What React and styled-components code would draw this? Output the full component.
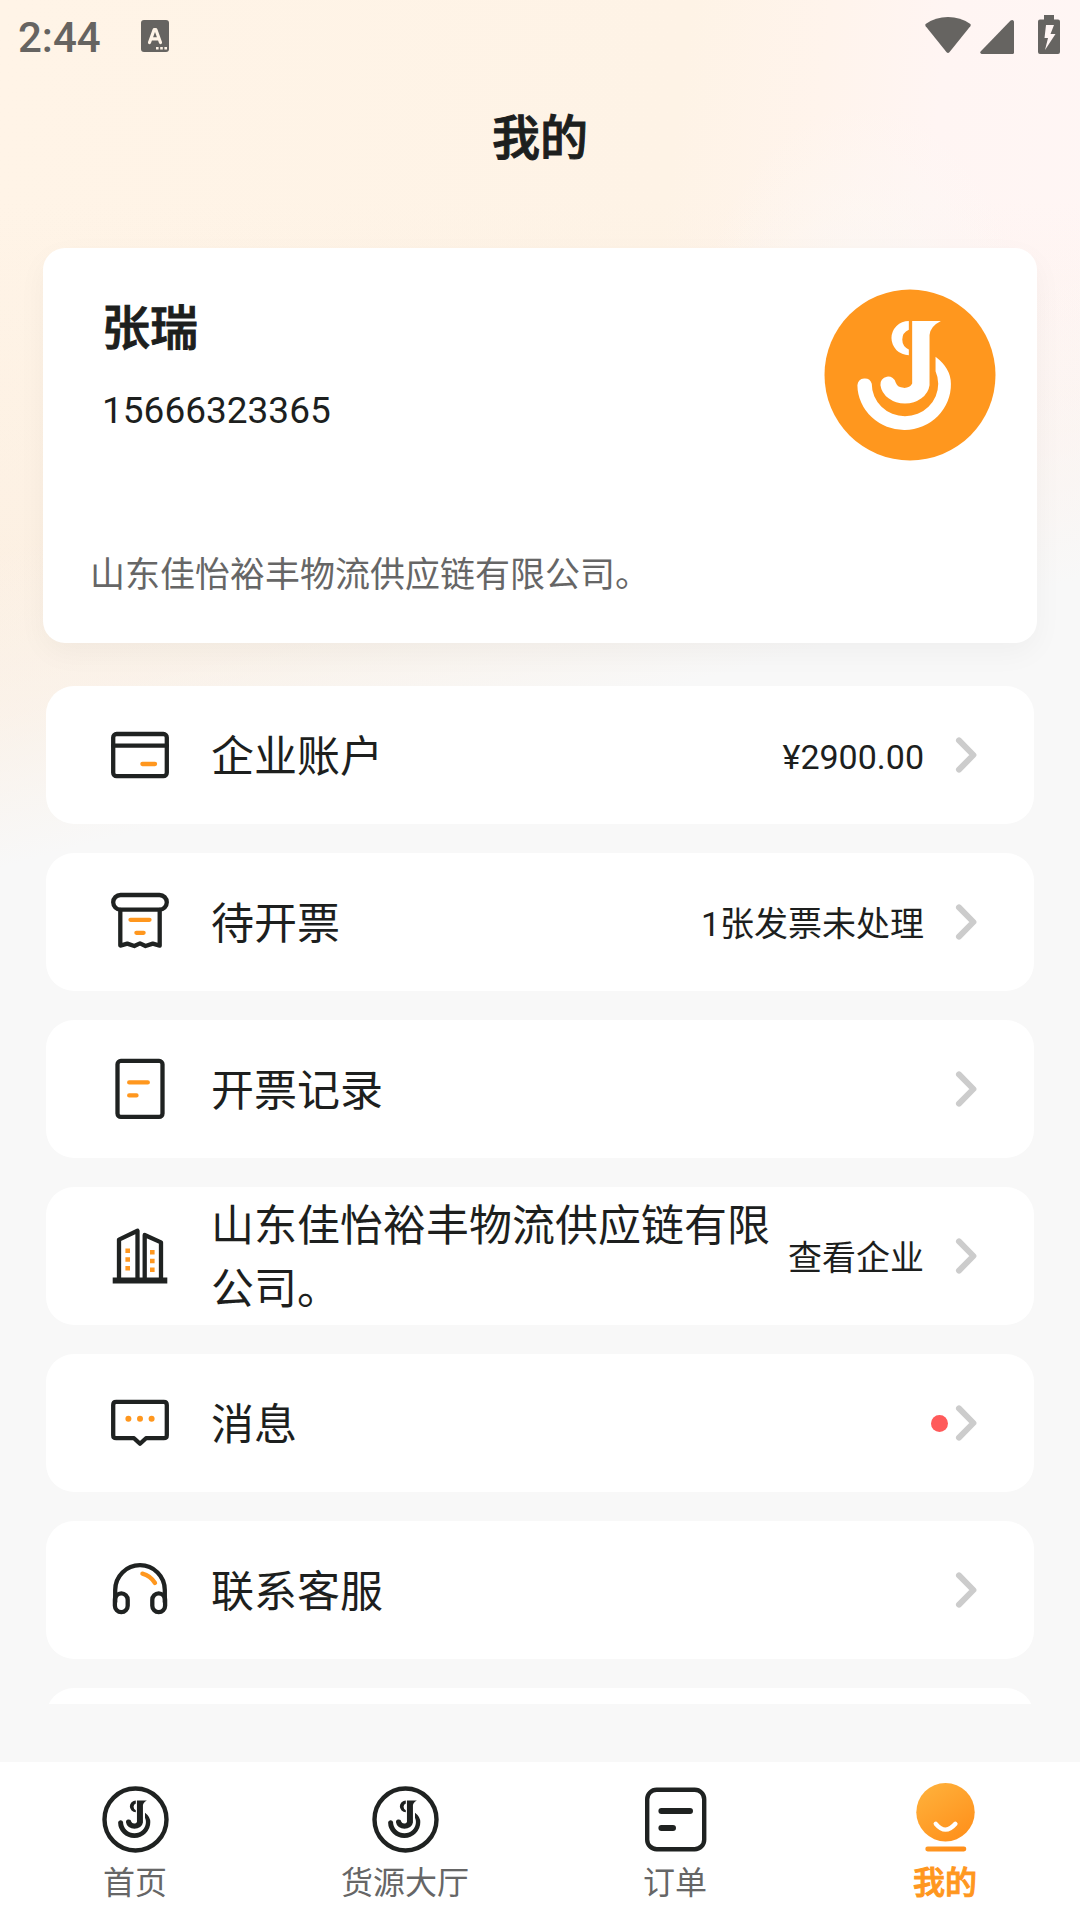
import React from 'react';
import styled, { createGlobalStyle } from 'styled-components';

const GlobalStyle = createGlobalStyle`
  * {
    box-sizing: border-box;
  }

  body {
    margin: 0;
    background: #f8f8f8;
    color: #1d1f1e;
    font-family: Roboto, 'Noto Sans CJK SC', sans-serif;
  }
`;

const Page = styled.div`
  display: flex;
  flex-direction: column;
  height: 100vh;
  background:
    linear-gradient(165deg, rgba(248, 248, 248, 0) 46%, rgba(248, 248, 248, 0.35) 60%, #f8f8f8 73%) 0 0 / 100% 900px no-repeat,
    radial-gradient(ellipse 170px 260px at 80% 360px, rgba(251, 249, 246, 0.9), rgba(252, 248, 245, 0)) no-repeat,
    linear-gradient(180deg, rgba(248, 234, 220, 0) 200px, rgba(248, 234, 220, 0.5) 700px) 0 0 / 100% 900px no-repeat,
    linear-gradient(97deg, #fff4e7 0%, #fef3e6 58%, #fff4ec 70%, #fff5f3 80%, #fff6f5 100%) 0 0 / 100% 900px no-repeat,
    #f8f8f8;
`;

const StatusBar = styled.div`
  display: flex;
  align-items: center;
  justify-content: space-between;
  height: 72px;
  padding: 0 20px 0 18px;
  color: #666461;
`;

const StatusGroup = styled.div`
  display: flex;
  align-items: center;
  gap: ${({ $gap }) => $gap}px;
`;

const Clock = styled.span`
  padding-top: 4px;
  font-size: 42px;
  font-weight: 500;
  line-height: 76px;
`;

const Header = styled.header`
  display: flex;
  align-items: center;
  justify-content: center;
  height: 130px;
  padding-top: 4px;
`;

const Title = styled.h1`
  margin: 0;
  font-size: 48px;
  font-weight: 500;
  line-height: 60px;
  -webkit-text-stroke: 1px currentColor;
`;

const Content = styled.main`
  flex: 1;
  min-height: 0;
  margin-bottom: 58px;
  padding: 46px 43px 0;
  overflow-y: auto;
  scrollbar-width: none;
`;

const ProfileCard = styled.section`
  padding: 41px 41px 42px 47px;
  border-radius: 22px;
  background: #fff;
  box-shadow: 0 10px 30px rgba(0, 0, 0, 0.04);
`;

const ProfileTop = styled.div`
  display: flex;
  justify-content: space-between;
  margin-bottom: 90px;
`;

const ProfileInfo = styled.div`
  padding: 10px 0 0 12px;
`;

const Name = styled.h2`
  margin: 0 0 30px;
  font-size: 48px;
  font-weight: 500;
  line-height: 60px;
  -webkit-text-stroke: 1px currentColor;
`;

const Phone = styled.p`
  margin: 0;
  font-size: 37px;
  line-height: 44px;
`;

const Company = styled.p`
  margin: 0;
  color: #666;
  font-size: 35px;
  line-height: 50px;
`;

const Menu = styled.div`
  display: flex;
  flex-direction: column;
  gap: 29px;
  padding: 43px 3px 0;
`;

const MenuRow = styled.button`
  display: flex;
  flex-shrink: 0;
  align-items: center;
  width: 100%;
  height: 138px;
  padding: 0 50px 0 62px;
  border: 0;
  border-radius: 28px;
  background: #fff;
  color: inherit;
  font-family: inherit;
  text-align: left;
`;

const MenuLabel = styled.span`
  flex: 1;
  margin: 0 12px 0 39px;
  padding-top: 4px;
  font-size: 43px;
  line-height: 63px;
`;

const MenuValue = styled.span`
  margin-right: 24px;
  padding-top: 4px;
  font-size: 34px;
  line-height: 50px;
`;

const Dot = styled.span`
  width: 17px;
  height: 17px;
  border-radius: 50%;
  background: #ff5a5a;
`;

const TabBar = styled.nav`
  display: flex;
  flex-shrink: 0;
  background: #fff;
`;

const Tab = styled.a`
  display: flex;
  flex: 1;
  flex-direction: column;
  align-items: center;
  gap: 5px;
  padding: 21px 0 14px;
  color: ${({ $active }) => ($active ? '#ff971e' : '#666')};
  font-size: 32px;
  font-weight: ${({ $active }) => ($active ? 500 : 400)};
  line-height: 46px;
  text-decoration: none;
  -webkit-text-stroke: ${({ $active }) => ($active ? '1px currentColor' : '0')};
`;

const INK = '#1f2221';
const ORANGE = '#ff971e';

const LineIcon = ({ children }) => (
  <svg
    width="64"
    height="64"
    viewBox="0 0 64 64"
    fill="none"
    stroke={INK}
    strokeWidth="4.3"
    strokeLinecap="round"
    strokeLinejoin="round"
    aria-hidden="true"
  >
    {children}
  </svg>
);

const CardIcon = () => (
  <LineIcon>
    <rect x="5.2" y="11" width="53.6" height="42.2" rx="3.4" />
    <path d="M5.2 22.7H58.8" />
    <path d="M34.4 41H47" stroke={ORANGE} />
  </LineIcon>
);

const TicketIcon = () => (
  <LineIcon>
    <rect x="5.2" y="5" width="53.6" height="14.6" rx="7.3" />
    <path d="M12.3 20V55.6L19.3 53.6L26.3 56L32 53.4L37.5 56L44.8 53.6L51.7 55.6V20" />
    <path d="M22.5 29.8H41.5M28.4 42.8H35.6" stroke={ORANGE} />
  </LineIcon>
);

const RecordIcon = () => (
  <LineIcon>
    <rect x="9.5" y="3.9" width="45" height="56" rx="3.4" />
    <path d="M21.2 25.4H39.8M21.2 38.4H28.5" stroke={ORANGE} />
  </LineIcon>
);

const BuildingIcon = () => (
  <LineIcon>
    <path d="M11 56V15.6L29.5 6.8V56M36.7 56V11L53 18.4V56" />
    <path d="M4.7 56.4H59.3" strokeWidth="6" strokeLinecap="butt" />
    <path
      d="M17.4 26.7H22M17.4 35.5H22M17.4 44.3H22M42 28.3H46.6M42 37H46.6M42 45.7H46.6"
      stroke={ORANGE}
      strokeWidth="4.6"
      strokeLinecap="butt"
    />
  </LineIcon>
);

const MessageIcon = () => (
  <LineIcon>
    <path d="M8.2 10.9H55.8Q58.8 10.9 58.8 13.9V44.2Q58.8 47.2 55.8 47.2H38L32 52.8L26 47.2H8.2Q5.2 47.2 5.2 44.2V13.9Q5.2 10.9 8.2 10.9Z" />
    <g fill={ORANGE} stroke="none">
      <circle cx="20.4" cy="27.8" r="3" />
      <circle cx="32" cy="27.8" r="3" />
      <circle cx="43.6" cy="27.8" r="3" />
    </g>
  </LineIcon>
);

const HeadsetIcon = () => (
  <LineIcon>
    <path d="M7.2 44V32A24.8 24.8 0 0 1 56.8 32V44" />
    <rect x="6.9" y="35.3" width="12.8" height="18.8" rx="6.4" />
    <rect x="44.3" y="35.3" width="12.8" height="18.8" rx="6.4" />
    <path d="M34.4 15.6Q42.4 17.6 47 25" stroke={ORANGE} />
  </LineIcon>
);

const Chevron = () => (
  <svg width="36" height="44" viewBox="0 0 36 44" fill="none" aria-hidden="true">
    <path d="M11 7.4L25.4 22L11 36.6" stroke="#ccc" strokeWidth="6" strokeLinecap="round" strokeLinejoin="round" />
  </svg>
);

const LogoMark = () => (
  <>
    <path d="M264 96H350Q318 112 316 138V288A74 62 0 0 1 169 288A23 22 0 0 1 215 281A26 21 0 0 0 264 283Z" />
    <path d="M254 96A52 51 0 0 0 254 198V181A32 32 0 0 1 254 122Z" />
    <path d="M100 288A22 22 0 0 1 143 284A99.5 97 0 0 0 342 284Q342 264 334 246V203Q380 238 380 284A140 136 0 0 1 100 288Z" />
  </>
);

const Avatar = () => (
  <svg width="172" height="172" viewBox="0 0 515 515" aria-hidden="true">
    <circle cx="257.5" cy="257.5" r="256" fill={ORANGE} />
    <g fill="#fff">
      <LogoMark />
    </g>
  </svg>
);

const LogoTabIcon = () => (
  <svg width="72" height="72" viewBox="0 0 72 72" aria-hidden="true">
    <circle cx="36.5" cy="36.5" r="31" fill="none" stroke={INK} strokeWidth="4.4" />
    <g fill={INK} transform="translate(7.6 6.4) scale(.115)">
      <LogoMark />
    </g>
  </svg>
);

const OrderTabIcon = () => (
  <svg width="72" height="72" viewBox="0 0 72 72" fill="none" stroke={INK} strokeLinecap="round" aria-hidden="true">
    <rect x="8.2" y="6.7" width="57" height="59.5" rx="9.5" strokeWidth="4.4" />
    <path d="M22.4 28H51M22.4 45H34" strokeWidth="6" />
  </svg>
);

const MineTabIcon = () => (
  <svg width="72" height="72" viewBox="0 0 72 72" fill="none" aria-hidden="true">
    <defs>
      <linearGradient id="mine" x1="14" y1="4" x2="52" y2="62" gradientUnits="userSpaceOnUse">
        <stop stopColor="#ffb03a" />
        <stop offset="1" stopColor="#ff8f1a" />
      </linearGradient>
    </defs>
    <circle cx="36.5" cy="29.2" r="29.2" fill="url(#mine)" />
    <path d="M26.8 40.8Q36.5 52.4 46.4 40.8" stroke="#fff" strokeWidth="4.4" strokeLinecap="round" />
    <rect x="16.3" y="63.6" width="41" height="4.8" rx="2.4" fill="url(#mine)" />
  </svg>
);

const InputModeIcon = () => (
  <svg width="28" height="32" viewBox="0 0 28 32" fill="none" aria-hidden="true">
    <rect width="28" height="32" rx="3" fill="currentColor" />
    <path
      d="M8.5 22.5L13.2 9.5H14.8L19.5 22.5M10.5 18.8H17.5"
      stroke="#fff4e7"
      strokeWidth="3.2"
      strokeLinecap="round"
      strokeLinejoin="round"
    />
    <path d="M15 28.2H17.6M19.2 28.2H21.8M23.4 28.2H26" stroke="#fff4e7" strokeWidth="2.6" />
  </svg>
);

const WifiIcon = () => (
  <svg width="46" height="40" viewBox="0 0 46 40" fill="currentColor" aria-hidden="true">
    <path d="M0.7 10.2Q-0.3 8.8 1 7.8Q10.5 1 23 1Q35.5 1 45 7.8Q46.3 8.8 45.3 10.2L24.4 36.2Q23 37.8 21.6 36.2Z" />
  </svg>
);

const SignalIcon = () => (
  <svg width="34" height="40" viewBox="0 0 34 40" fill="currentColor" aria-hidden="true">
    <path d="M0.6 35.4L30.6 4.6Q32.2 3.4 33.4 4.4Q34 5 34 6V36.5Q34 38 32.5 38H1.6Q-0.6 37.2 0.6 35.4Z" />
  </svg>
);

const BatteryIcon = () => (
  <svg width="22" height="40" viewBox="0 0 22 40" fill="currentColor" overflow="visible" aria-hidden="true">
    <path
      fillRule="evenodd"
      d="M6 -1H16V3.5H20Q22 3.5 22 5.5V36Q22 38 20 38H2Q0 38 0 36V5.5Q0 3.5 2 3.5H6ZM8 9L6.5 22H10L7 34L17.5 18H12.5L16 9Z"
    />
  </svg>
);

const menuItems = [
  { icon: CardIcon, label: '企业账户', value: '¥2900.00' },
  { icon: TicketIcon, label: '待开票', value: '1张发票未处理' },
  { icon: RecordIcon, label: '开票记录' },
  { icon: BuildingIcon, label: '山东佳怡裕丰物流供应链有限公司。', value: '查看企业' },
  { icon: MessageIcon, label: '消息', unread: true },
  { icon: HeadsetIcon, label: '联系客服' },
];

const tabs = [
  { icon: LogoTabIcon, label: '首页' },
  { icon: LogoTabIcon, label: '货源大厅' },
  { icon: OrderTabIcon, label: '订单' },
  { icon: MineTabIcon, label: '我的', active: true },
];

const App = () => {
  return (
    <Page>
      <GlobalStyle />
      <StatusBar>
        <StatusGroup $gap={40}>
          <Clock>2:44</Clock>
          <InputModeIcon />
        </StatusGroup>
        <StatusGroup $gap={9}>
          <WifiIcon />
          <StatusGroup $gap={24}>
            <SignalIcon />
            <BatteryIcon />
          </StatusGroup>
        </StatusGroup>
      </StatusBar>
      <Header>
        <Title>我的</Title>
      </Header>
      <Content>
        <ProfileCard>
          <ProfileTop>
            <ProfileInfo>
              <Name>张瑞</Name>
              <Phone>15666323365</Phone>
            </ProfileInfo>
            <Avatar />
          </ProfileTop>
          <Company>山东佳怡裕丰物流供应链有限公司。</Company>
        </ProfileCard>
        <Menu>
          {menuItems.map(({ icon: Icon, label, value, unread }) => (
            <MenuRow key={label} type="button">
              <Icon />
              <MenuLabel>{label}</MenuLabel>
              {value && <MenuValue>{value}</MenuValue>}
              {unread && <Dot />}
              <Chevron />
            </MenuRow>
          ))}
          <MenuRow as="div" />
        </Menu>
      </Content>
      <TabBar>
        {tabs.map(({ icon: Icon, label, active }) => (
          <Tab key={label} href="#" $active={active} aria-current={active ? 'page' : undefined}>
            <Icon />
            {label}
          </Tab>
        ))}
      </TabBar>
    </Page>
  );
};

export default App;
